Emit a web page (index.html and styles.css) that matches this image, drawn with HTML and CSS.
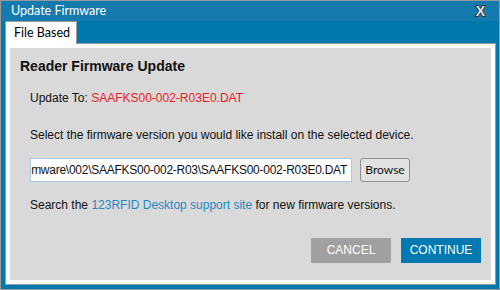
FILE: index.html
```html
<!DOCTYPE html>
<html>
<head>
<meta charset="utf-8">
<link rel="stylesheet" href="styles.css">
</head>
<body>
<div class="window">
  <div class="titlebar">
    <span class="title">Update Firmware</span>
    <span class="close">X</span>
  </div>
  <div class="tabs">
    <div class="tab">File Based</div>
  </div>
  <div class="panel">
    <div class="inner">
      <div class="heading">Reader Firmware Update</div>
      <div class="row first">Update To: <span class="red">SAAFKS00-002-R03E0.DAT</span></div>
      <div class="row second">Select the firmware version you would like install on the selected device.</div>
      <div class="filerow">
        <div class="path"><span>mware\002\SAAFKS00-002-R03\SAAFKS00-002-R03E0.DAT</span></div>
        <div class="browse">Browse</div>
      </div>
      <div class="row search">Search the <span class="link">123RFID Desktop support site</span> for new firmware versions.</div>
      <div class="actions">
        <div class="btn cancel">CANCEL</div>
        <div class="btn continue">CONTINUE</div>
      </div>
    </div>
  </div>
</div>
</body>
</html>
```
FILE: styles.css
```css
html, body {
  margin: 0;
  padding: 0;
}
body {
  width: 500px;
  height: 290px;
  overflow: hidden;
}
.window {
  box-sizing: border-box;
  width: 500px;
  height: 290px;
  border: 1px solid #9a9a9a;
  background: #0077ad;
  display: flex;
  flex-direction: column;
}
.titlebar {
  height: 20px;
  background: #157aae;
  display: flex;
  align-items: center;
  padding-left: 10px;
  padding-right: 14px;
}
.title {
  font-family: Lato, "Noto Sans", sans-serif;
  font-size: 12.5px;
  color: #ffffff;
  line-height: 20px;
}
.close {
  margin-left: auto;
  font-family: "Liberation Sans", Arial, sans-serif;
  font-weight: bold;
  font-size: 14px;
  line-height: 20px;
  color: #e4e4e4;
  -webkit-text-stroke: 1.6px #2a2a2a;
  paint-order: stroke fill;
}
.tabs {
  display: flex;
  padding-left: 4px;
}
.tab {
  box-sizing: border-box;
  height: 23px;
  width: 72px;
  margin-bottom: -1px;
  position: relative;
  background: #ffffff;
  border: 1px solid #9a9a9a;
  border-bottom: none;
  font-family: Lato, "Noto Sans", sans-serif;
  font-size: 12.5px;
  line-height: 22px;
  color: #000;
  padding-left: 8px;
}
.panel {
  box-sizing: border-box;
  margin: 0 3px 0 4px;
  height: 242px;
  border: 1px solid #9a9a9a;
  background: #ffffff;
  padding: 4px;
}
.inner {
  box-sizing: border-box;
  height: 100%;
  background: #d9d9d9;
  padding: 8px 10px 0 10px;
  font-family: "Liberation Sans", Arial, sans-serif;
  color: #111;
}
.heading {
  font-size: 14px;
  font-weight: bold;
  line-height: 20px;
}
.row {
  font-size: 12px;
  line-height: 16px;
  padding-left: 10px;
}
.row.first { margin-top: 14px; }
.row.second { margin-top: 21px; }
.red { color: #f01c24; }
.link { color: #1f8ac4; }
.filerow {
  display: flex;
  align-items: flex-start;
  margin-top: 15px;
  padding-left: 10px;
}
.path {
  box-sizing: border-box;
  width: 322px;
  height: 24px;
  background: #fff;
  border: 1px solid #a9c9e8;
  display: flex;
  justify-content: flex-end;
  align-items: center;
  overflow: hidden;
  padding: 0 4px 0 1px;
  font-size: 12px;
  letter-spacing: -0.26px;
  white-space: nowrap;
}
.path span { flex: none; }
.browse {
  box-sizing: border-box;
  margin-left: 8px;
  width: 50px;
  height: 24px;
  background: #e1e1e1;
  border: 1px solid #8f8f8f;
  border-radius: 3px;
  font-family: Lato, "Noto Sans", sans-serif;
  font-size: 12px;
  line-height: 22px;
  text-align: center;
  color: #111;
}
.row.search { margin-top: 15px; }
.actions {
  display: flex;
  justify-content: flex-end;
  gap: 10px;
  margin-top: 25px;
}
.btn {
  width: 80px;
  height: 25px;
  line-height: 25px;
  text-align: center;
  color: #fff;
  font-size: 12px;
}
.cancel { background: #a0a0a0; }
.continue { background: #0079b0; }
```
